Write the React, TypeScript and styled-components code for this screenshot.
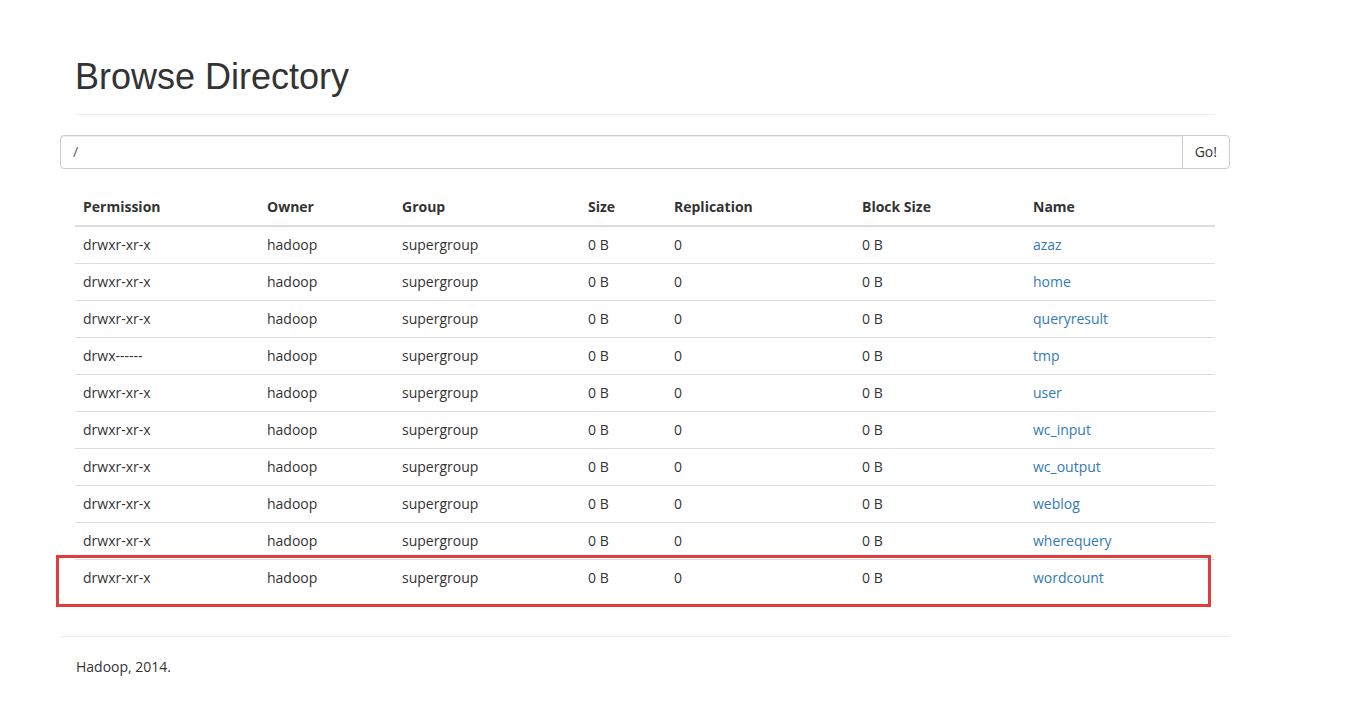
import React from "react";
import styled, { createGlobalStyle } from "styled-components";

const GlobalStyle = createGlobalStyle`
  html, body {
    margin: 0;
    padding: 0;
    background: #ffffff;
  }
  body {
    font-family: "Open Sans", "Noto Sans", sans-serif;
    font-size: 14px;
    line-height: 1.42857;
    color: #333333;
  }
`;

const Container = styled.div`
  position: relative;
  width: 1170px;
  margin-left: 60px;
  padding-top: 57px;
`;

const PageHeader = styled.div`
  margin: 0 15px 20px;
  padding-bottom: 17px;
  border-bottom: 1px solid #eeeeee;
`;

const Title = styled.h1`
  margin: 0;
  padding-left: 0;
  font-family: "Liberation Sans", Arial, sans-serif;
  font-size: 36px;
  font-weight: 400;
  line-height: 1.1;
  color: #333333;
`;

const InputGroup = styled.form`
  display: flex;
  height: 34px;
  margin: 0;
`;

const PathInput = styled.input`
  flex: 1;
  height: 34px;
  box-sizing: border-box;
  padding: 6px 12px;
  border: 1px solid #cccccc;
  border-radius: 4px 0 0 4px;
  font-family: "Open Sans", "Noto Sans", sans-serif;
  font-size: 14px;
  color: #555555;
  box-shadow: inset 0 1px 1px rgba(0, 0, 0, 0.075);
  outline: none;
`;

const GoButton = styled.button`
  height: 34px;
  box-sizing: border-box;
  padding: 6px 12px;
  margin-left: -1px;
  border: 1px solid #cccccc;
  border-radius: 0 4px 4px 0;
  background: #ffffff;
  font-family: "Open Sans", "Noto Sans", sans-serif;
  font-size: 14px;
  color: #333333;
`;

const Table = styled.table`
  width: 1140px;
  margin: 20px 15px 40px;
  border-collapse: collapse;
  border-spacing: 0;
  table-layout: fixed;
`;

const HeadCell = styled.th<{ w: number }>`
  box-sizing: border-box;
  width: ${({ w }) => w}px;
  padding: 8px;
  text-align: left;
  font-weight: 700;
  border-bottom: 2px solid #dddddd;
  line-height: 1.42857;
`;

const Cell = styled.td`
  padding: 8px;
  border-top: 1px solid #dddddd;
  line-height: 1.42857;
  height: 20px;
`;

const NameLink = styled.a`
  color: #337ab7;
  text-decoration: none;
`;

const Rule = styled.hr`
  margin: 0 0 20px;
  border: 0;
  border-top: 1px solid #eeeeee;
`;

const Footer = styled.p`
  margin: 0 16px 10px;
`;

const Highlight = styled.div`
  position: absolute;
  left: -4px;
  top: 555px;
  width: 1149px;
  height: 46px;
  border: 3px solid #e23b3b;
  pointer-events: none;
`;

const columns: [string, number][] = [
  ["Permission", 184],
  ["Owner", 135],
  ["Group", 186],
  ["Size", 86],
  ["Replication", 188],
  ["Block Size", 171],
  ["Name", 190],
];

const entries: [string, string][] = [
  ["drwxr-xr-x", "azaz"],
  ["drwxr-xr-x", "home"],
  ["drwxr-xr-x", "queryresult"],
  ["drwx------", "tmp"],
  ["drwxr-xr-x", "user"],
  ["drwxr-xr-x", "wc_input"],
  ["drwxr-xr-x", "wc_output"],
  ["drwxr-xr-x", "weblog"],
  ["drwxr-xr-x", "wherequery"],
  ["drwxr-xr-x", "wordcount"],
];

const App = () => {
  return (
    <>
      <GlobalStyle />
      <Container>
        <PageHeader>
          <Title>Browse Directory</Title>
        </PageHeader>
        <InputGroup onSubmit={(e) => e.preventDefault()}>
          <PathInput defaultValue="/" />
          <GoButton type="submit">Go!</GoButton>
        </InputGroup>
        <Table>
          <thead>
            <tr>
              {columns.map(([label, w]) => (
                <HeadCell key={label} w={w}>{label}</HeadCell>
              ))}
            </tr>
          </thead>
          <tbody>
            {entries.map(([perm, name]) => (
              <tr key={name}>
                <Cell>{perm}</Cell>
                <Cell>hadoop</Cell>
                <Cell>supergroup</Cell>
                <Cell>0 B</Cell>
                <Cell>0</Cell>
                <Cell>0 B</Cell>
                <Cell>
                  <NameLink href="#">{name}</NameLink>
                </Cell>
              </tr>
            ))}
          </tbody>
        </Table>
        <Rule />
        <Footer>Hadoop, 2014.</Footer>
        <Highlight />
      </Container>
    </>
  );
};

export default App;
